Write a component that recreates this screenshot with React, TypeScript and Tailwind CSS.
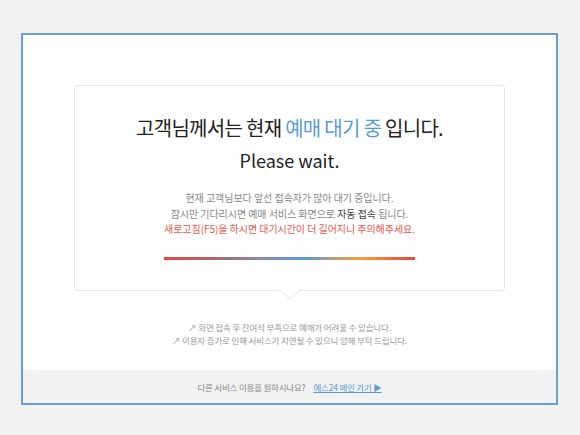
import React from "react";

const ko = { fontFamily: '"Noto Sans CJK KR", "Noto Sans", sans-serif' };

export default function App() {
  return (
    <div className="w-[580px] h-[435px] bg-[#f2f2f2] pt-[33px] pl-[21px]" style={ko}>
      <div className="w-[537px] h-[372px] border-2 border-[#6a9fd4] bg-white flex flex-col">
        <div className="flex-1 flex flex-col items-center pt-[50px]">
          <div className="relative w-[431px] h-[206px] border border-[#e6e6e6] rounded-[3px] bg-white flex flex-col items-center pt-[28px]">
            <div className="text-[20px] leading-[27px] tracking-[-0.7px] text-[#222]">
              고객님께서는 현재 <span className="text-[#5b9bd5]">예매 대기 중</span> 입니다.
            </div>
            <div className="mt-[6px] text-[18px] leading-[26px] text-[#222]">Please wait.</div>
            <div className="mt-[17px] text-[10px] leading-[15.5px] tracking-[-0.05px] text-[#888] text-center">
              <div>현재 고객님보다 앞선 접속자가 많아 대기 중입니다.</div>
              <div>
                잠시만 기다리시면 예매 서비스 화면으로 <span className="text-[#444]">자동 접속</span> 됩니다.
              </div>
              <div className="text-[#e5574f]">새로고침(F5)을 하시면 대기시간이 더 길어지니 주의해주세요.</div>
            </div>
            <div
              className="mt-[20px] w-[251px] h-[3px]"
              style={{
                background:
                  "linear-gradient(to right, #e4443f 0%, #a0707e 25%, #8a8fb0 40%, #5b9bd5 55%, #f5a03a 78%, #e4443f 100%)",
              }}
            />
            <svg
              className="absolute left-1/2 -translate-x-1/2 top-full -mt-px"
              width="22"
              height="11"
              viewBox="0 0 22 11"
            >
              <path d="M0 0.5 L11 10 L22 0.5" fill="#fff" stroke="#e6e6e6" strokeWidth="1" />
              <rect x="1.5" y="0" width="19" height="1" fill="#fff" />
            </svg>
          </div>
          <div className="mt-[30px] text-[8.5px] leading-[13px] tracking-[-0.15px] text-[#999] text-center">
            <div>↗ 화면 접속 후 잔여석 부족으로 예매가 어려울 수 있습니다.</div>
            <div>↗ 이용자 증가로 인해 서비스가 지연될 수 있으니 양해 부탁 드립니다.</div>
          </div>
        </div>
        <div className="h-[33px] bg-[#f2f2f2] flex items-center justify-center text-[8.5px] tracking-[-0.2px] pt-px">
          <span className="text-[#888]">다른 서비스 이용을 원하시나요?</span>
          <a className="ml-[8px] text-[#5b9bd5] underline">예스24 메인 가기 ▶</a>
        </div>
      </div>
    </div>
  );
}
